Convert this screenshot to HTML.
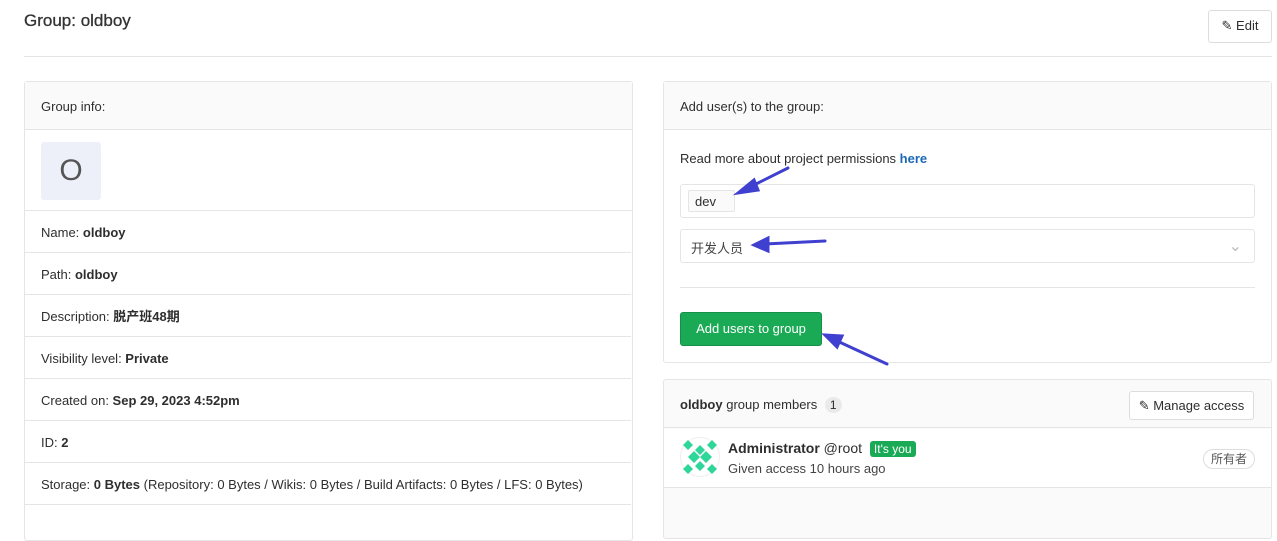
<!DOCTYPE html><html><head><style>
body{margin:0;background:#fff;font-family:"Liberation Sans","Noto Sans CJK SC",sans-serif;font-size:13px;color:#2e2e2e;width:1277px;height:511px;overflow:hidden;position:relative}
.a{position:absolute;box-sizing:border-box}
.panel{border:1px solid #e5e5e5;border-radius:3px;background:#fff}
.hd{background:#fafafa;border-bottom:1px solid #e5e5e5}
.row{border-bottom:1px solid #e5e5e5;padding-left:16px;line-height:44px;left:25px;width:606px}
b{font-weight:bold;color:#2e2e2e}
.btn{border:1px solid #ddd;border-radius:3px;background:#fff;font-size:13px;line-height:30px;text-align:center}
</style></head><body>
<div class="a" style="left:24px;top:11px;font-size:17px;color:#333;-webkit-text-stroke:0.3px #333">Group: oldboy</div>
<div class="a btn" style="left:1208px;top:10px;width:64px;height:33px">✎ Edit</div>
<div class="a" style="left:24px;top:56px;width:1248px;height:1px;background:#e5e5e5"></div>

<div class="a panel" style="left:24px;top:81px;width:609px;height:460px"></div>
<div class="a hd" style="left:25px;top:82px;width:607px;height:48px;padding:17px 0 0 16px">Group info:</div>
<div class="a" style="left:25px;top:130px;width:607px;height:81px;border-bottom:1px solid #e5e5e5"></div>
<div class="a" style="left:41px;top:142px;width:60px;height:58px;background:#eef0f9;border-radius:3px;font-size:30px;line-height:58px;text-align:center;color:#555">O</div>
<div class="a row" style="top:211px;height:42px">Name: <b>oldboy</b></div>
<div class="a row" style="top:253px;height:42px">Path: <b>oldboy</b></div>
<div class="a row" style="top:295px;height:42px">Description: <b>脱产班48期</b></div>
<div class="a row" style="top:337px;height:42px">Visibility level: <b>Private</b></div>
<div class="a row" style="top:379px;height:42px">Created on: <b>Sep 29, 2023 4:52pm</b></div>
<div class="a row" style="top:421px;height:42px">ID: <b>2</b></div>
<div class="a row" style="top:463px;height:42px">Storage: <b>0 Bytes</b> (Repository: 0 Bytes / Wikis: 0 Bytes / Build Artifacts: 0 Bytes / LFS: 0 Bytes)</div>

<div class="a panel" style="left:663px;top:81px;width:609px;height:282px"></div>
<div class="a hd" style="left:664px;top:82px;width:607px;height:48px;padding:17px 0 0 16px">Add user(s) to the group:</div>
<div class="a" style="left:680px;top:151px">Read more about project permissions <b style="color:#1b69b6">here</b></div>
<div class="a" style="left:680px;top:184px;width:575px;height:34px;border:1px solid #e5e5e5;border-radius:3px"></div>
<div class="a" style="left:688px;top:190px;width:47px;height:22px;background:#fafafa;border:1px solid #e5e5e5;border-radius:2px;padding:3px 0 0 6px">dev</div>
<div class="a" style="left:680px;top:229px;width:575px;height:34px;border:1px solid #e5e5e5;border-radius:3px;padding:8px 0 0 10px;color:#444">开发人员<span style="position:absolute;right:12px;top:6px;color:#bbb;font-size:16px">⌄</span></div>
<div class="a" style="left:680px;top:287px;width:575px;height:1px;background:#e5e5e5"></div>
<div class="a" style="left:680px;top:312px;width:142px;height:34px;background:#1aaa55;border:1px solid #168f48;border-radius:3px;color:#fff;line-height:32px;text-align:center">Add users to group</div>

<div class="a panel" style="left:663px;top:379px;width:609px;height:160px;background:#fafafa"></div>
<div class="a" style="left:664px;top:380px;width:607px;height:48px;border-bottom:1px solid #e5e5e5"></div>
<div class="a" style="left:680px;top:397px"><b>oldboy</b> group members <span style="display:inline-block;background:#eaeaea;border-radius:9px;padding:1px 5px;font-size:12px;margin-left:4px">1</span></div>
<div class="a btn" style="left:1129px;top:391px;width:125px;height:29px;line-height:27px">✎ Manage access</div>
<div class="a" style="left:664px;top:429px;width:607px;height:59px;background:#fff;border-bottom:1px solid #e5e5e5"></div>
<svg class="a" style="left:680px;top:437px" width="40" height="40" viewBox="0 0 40 40"><circle cx="20" cy="20" r="19.5" fill="#fff" stroke="#eee"/><g fill="#2fd69a"><path d="M8 3l5 5-5 5-5-5zM20 8l5 5-5 5-5-5zM32 3l5 5-5 5-5-5zM14 14l6 6-6 6-6-6zM26 14l6 6-6 6-6-6zM20 24l5 5-5 5-5-5zM8 27l5 5-5 5-5-5zM32 27l5 5-5 5-5-5z"/></g></svg>
<div class="a" style="left:728px;top:440px;font-size:14px"><b style="font-weight:600">Administrator</b> @root <span style="display:inline-block;background:#1aaa55;color:#fff;font-size:12px;padding:1px 4px;border-radius:3px;margin-left:4px">It's you</span></div>
<div class="a" style="left:728px;top:461px;font-size:13px;color:#444">Given access 10 hours ago</div>
<div class="a" style="left:1203px;top:449px;width:52px;height:20px;border:1px solid #ddd;border-radius:10px;font-size:12px;text-align:center;line-height:18px;color:#555">所有者</div>

<svg class="a" style="left:0;top:0" width="1277" height="511"><g fill="#4040d0" stroke="#4040d0" stroke-width="3" stroke-linecap="round">
<line x1="788" y1="168" x2="748" y2="188"/><path d="M738 193l16-13 4 10z"/>
<line x1="825" y1="241" x2="765" y2="244"/><path d="M754 245l14-7 0 13z"/>
<line x1="887" y1="364" x2="835" y2="340"/><path d="M825 335l17 1-5 11z"/>
</g></svg>
</body></html>
